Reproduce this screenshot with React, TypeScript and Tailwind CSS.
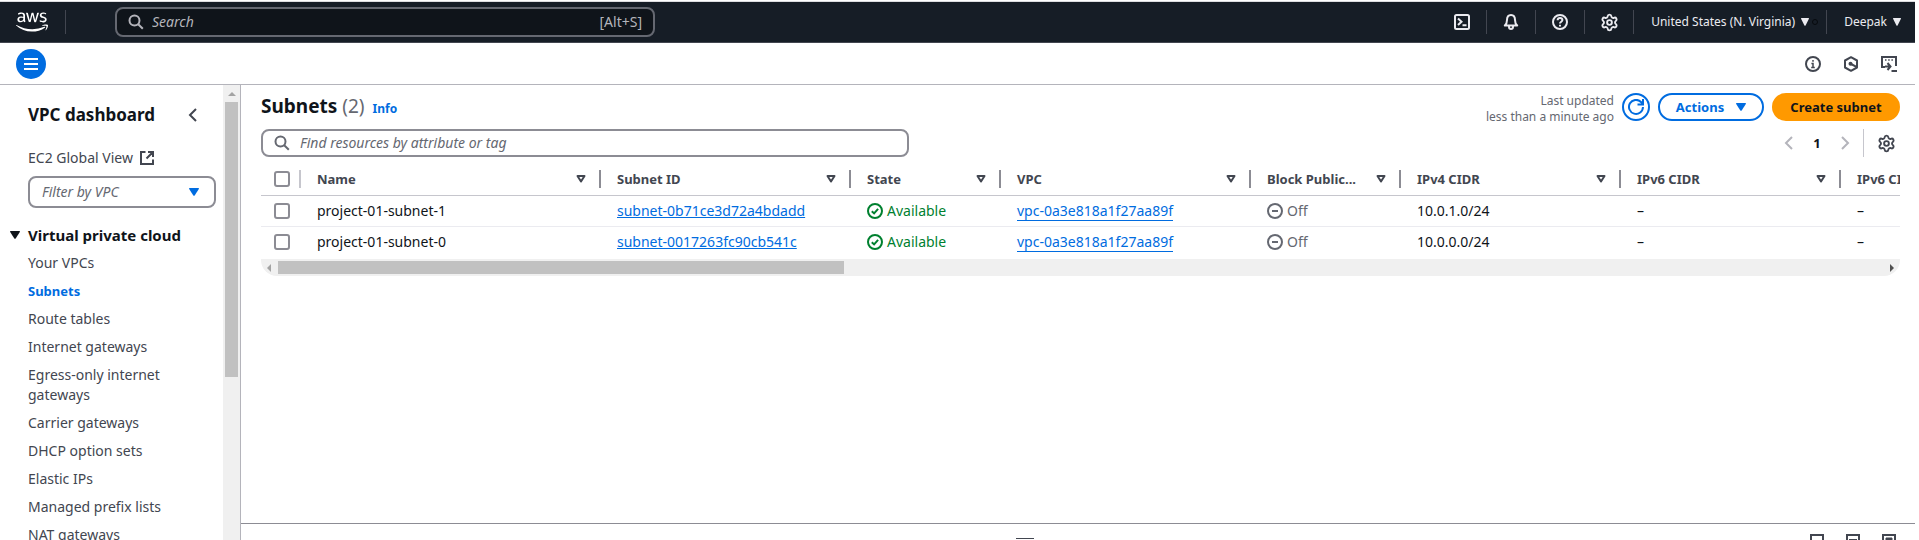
import React from "react";
import { Settings } from "lucide-react";
import { FaAws } from "react-icons/fa";

type IconProps = { className?: string; children?: React.ReactNode };

function Icon({ className = "", children }: IconProps) {
  return (
    <svg
      viewBox="0 0 16 16"
      className={`size-4 shrink-0 fill-none stroke-current stroke-2 ${className}`}
      aria-hidden="true"
    >
      {children}
    </svg>
  );
}

const SearchIcon = ({ className }: IconProps) => (
  <Icon className={className}>
    <circle cx="6.500" cy="6.500" r="5" />
    <path d="m10.200 10.200 4.600 4.600" />
  </Icon>
);

const Caret = ({ className = "w-2.5" }: IconProps) => (
  <svg viewBox="0 0 10 8" preserveAspectRatio="none" className={`h-2 shrink-0 fill-current ${className}`} aria-hidden="true">
    <path d="M.5 0h9Q10.2.1 9.8.9L5.7 7.4Q5 8.3 4.3 7.4L.2.9Q-.2.1.5 0Z" />
  </svg>
);

const SortIcon = () => (
  <svg viewBox="0 0 10 8" className="h-2 w-2.5 fill-none stroke-current stroke-2" aria-hidden="true">
    <path d="M1.5 1h7L5 6.5Z" strokeLinejoin="round" />
  </svg>
);

const AngleLeft = ({ className = "" }: IconProps) => (
  <Icon className={className}>
    <path d="M11 2 5 8l6 6" />
  </Icon>
);

const AngleRight = ({ className = "" }: IconProps) => (
  <Icon className={className}>
    <path d="m5 2 6 6-6 6" />
  </Icon>
);

function HeaderDivider() {
  return <span className="h-6 w-px shrink-0 bg-[#424650]" />;
}

function TopNav() {
  return (
    <header className="flex h-[41px] shrink-0 items-center border-b border-[#424650] bg-[#161d26] pl-4 text-xs text-[#ebebf0]">
      <a href="#home" aria-label="AWS home" className="mr-[17px] text-white">
        <FaAws className="h-[26px] w-8" />
      </a>
      <HeaderDivider />
      <button aria-label="Services" className="ml-4 mr-[17px]">
        <Icon className="fill-current stroke-none">
          {[0, 6, 12].map((y) =>
            [0, 6, 12].map((x) => <rect key={`${x}-${y}`} x={x} y={y} width="4" height="4" rx=".6" />),
          )}
        </Icon>
      </button>
      <label className="flex h-[30px] w-[540px] items-center gap-2 rounded-lg border-2 border-[#656871] bg-[#0f141a] px-[11px] text-sm text-[#b4b4bb]">
        <SearchIcon />
        <input
          aria-label="Search"
          placeholder="Search"
          className="min-w-0 flex-1 bg-transparent italic outline-none placeholder:text-[#b4b4bb]"
        />
        <span>[Alt+S]</span>
      </label>
      <div className="ml-auto flex items-center gap-4 pr-[14px]">
        <button aria-label="CloudShell">
          <Icon>
            <rect x="1" y="1" width="14" height="14" rx="1.5" />
            <path d="m4 4.5 3.5 3.2L4 11M8.5 11.2h4" />
          </Icon>
        </button>
        <HeaderDivider />
        <button aria-label="Notifications">
          <Icon>
            <path d="M1.800 11.500h12.400c-1.700-1.500-2.200-2.600-2.200-5.500C12 3 10.500 1 8 1S4 3 4 6c0 2.900-.5 4-2.200 5.500Z" strokeLinejoin="round" />
            <path d="M6 12v1a2 2 0 0 0 4 0v-1" />
          </Icon>
        </button>
        <HeaderDivider />
        <button aria-label="Help">
          <Icon>
            <circle cx="8" cy="8" r="7" />
            <path d="M5.600 6.200C5.700 4.800 6.700 4 8 4s2.400.8 2.400 2.100C10.400 7.800 8 7.800 8 9.600M8 10.800v1.700" />
          </Icon>
        </button>
        <HeaderDivider />
        <button aria-label="Settings" className="flex w-4 justify-center">
          <Settings className="size-[19px] shrink-0" strokeWidth={2.4} />
        </button>
        <HeaderDivider />
        <button className="-mr-2 flex items-center gap-1.5 whitespace-nowrap pl-px">
          <span>United States (N. Virginia)</span>
          <Caret className="w-2" />
          <span className="-ml-[3px] size-1.5 rounded-full border border-[#06090d]" />
        </button>
        <HeaderDivider />
        <button className="flex items-center gap-1.5 pl-px">
          Deepak
          <Caret className="w-2" />
        </button>
      </div>
    </header>
  );
}

function ToolBar() {
  return (
    <div className="flex h-[42px] shrink-0 items-center border-b border-[#b4b4bb] pl-4 pr-[18px] text-[#424650]">
      <button aria-label="Open menu" className="grid size-[30px] place-items-center rounded-full bg-[#006ce0] text-white">
        <Icon>
          <path d="M1 3h14M1 8h14M1 13h14" />
        </Icon>
      </button>
      <div className="ml-auto flex items-center gap-[22px]">
        <button aria-label="Information">
          <Icon>
            <circle cx="8" cy="8" r="7" />
            <path d="M8 4v1.800M6.400 7.500H8V12M6.200 11.500h3.600" strokeWidth="1.500" />
          </Icon>
        </button>
        <button aria-label="Diagnostics">
          <Icon>
            <path d="m8 1.200 6 3.300v7l-6 3.300-6-3.300v-7Z" strokeLinejoin="round" />
            <circle cx="7.500" cy="7.800" r="2" fill="currentColor" stroke="none" />
            <path d="m8 8 5.500 2.800" />
          </Icon>
        </button>
        <button aria-label="Shell panel">
          <Icon>
            <path d="M4 11H1V1h14v9" />
            <path d="M4 4h1.500M7.200 4h1.500M10.400 4h1.500" strokeWidth="1.500" />
            <path d="M4 10.500h5M6.500 7l3 3.500-3 3.500M10.500 15H16" />
          </Icon>
        </button>
      </div>
    </div>
  );
}

const links = [
  "Your VPCs",
  "Subnets",
  "Route tables",
  "Internet gateways",
  "Egress-only internet gateways",
  "Carrier gateways",
  "DHCP option sets",
  "Elastic IPs",
  "Managed prefix lists",
  "NAT gateways",
];

function SideNav() {
  return (
    <aside className="flex w-[241px] shrink-0 overflow-hidden border-r border-[#b4b4bb]">
      <nav className="min-w-0 flex-1 pl-7 pr-[7px] pt-[18px] text-[#424650]">
        <div className="flex items-center justify-between pr-[15px]">
          <h2 className="whitespace-nowrap text-[17px] leading-6 font-bold text-[#0f141a]">VPC dashboard</h2>
          <button aria-label="Close navigation">
            <AngleLeft />
          </button>
        </div>
        <a href="#global" className="mt-[21px] flex items-center gap-1.5 leading-5">
          EC2 Global View
          <Icon>
            <path d="M6.500 2H2v12h12V9.500M9 2h5v5M14 2 7.500 8.500" />
          </Icon>
        </a>
        <div className="mt-2 flex h-8 items-center rounded-lg border-2 border-[#8c8c94] pl-3 pr-[15px]">
          <input
            aria-label="Filter by VPC"
            placeholder="Filter by VPC"
            className="min-w-0 flex-1 italic outline-none placeholder:text-[#656871]"
          />
          <Caret className="w-2.5 text-[#006ce0]" />
        </div>
        <button className="-ml-[18px] mt-[17px] flex items-center gap-2 whitespace-nowrap text-[15px] leading-5 font-bold text-[#0f141a]">
          <Caret />
          Virtual private cloud
        </button>
        <ul className="mt-2 flex flex-col gap-2 leading-5">
          {links.map((text) => (
            <li key={text} className="pr-8">
              <a href="#nav" className={text === "Subnets" ? "text-[13px] font-bold text-[#006ce0]" : ""}>
                {text}
              </a>
            </li>
          ))}
        </ul>
      </nav>
      <div className="flex w-[17px] shrink-0 flex-col items-center bg-[#f0f0f0]">
        <span className="flex h-[17px] items-center">
          <svg viewBox="0 0 8 4" className="h-1 w-2 fill-[#a3a3a3]" aria-hidden="true">
            <path d="M4 0 8 4H0Z" />
          </svg>
        </span>
        <span className="h-[275px] w-[13px] bg-[#c1c1c1]" />
      </div>
    </aside>
  );
}

const columns = [
  "Name",
  "Subnet ID",
  "State",
  "VPC",
  "Block Public...",
  "IPv4 CIDR",
  "IPv6 CIDR",
  "IPv6 CIDR association ID",
];

const rows = [
  { name: "project-01-subnet-1", id: "subnet-0b71ce3d72a4bdadd", cidr: "10.0.1.0/24" },
  { name: "project-01-subnet-0", id: "subnet-0017263fc90cb541c", cidr: "10.0.0.0/24" },
];

function Check({ label }: { label: string }) {
  return (
    <input
      type="checkbox"
      aria-label={label}
      className="ml-[13px] block size-4 appearance-none rounded-[3px] border-2 border-[#8c8c94] bg-white"
    />
  );
}

function SubnetTable() {
  return (
    <div className="mt-1.5 overflow-hidden">
      <table className="w-[1800px] table-fixed border-collapse text-left">
        <colgroup>
          <col className="w-10" />
          <col className="w-[300px]" />
          <col className="w-[250px]" />
          <col className="w-[150px]" />
          <col className="w-[250px]" />
          <col className="w-[150px]" />
          <col className="w-[220px]" />
          <col className="w-[220px]" />
          <col className="w-[220px]" />
        </colgroup>
        <thead className="text-[13px] text-[#424650]">
          <tr className="h-8 border-b border-[#c6c6cd]">
            <th className="p-0">
              <div className="flex items-center justify-between">
                <Check label="Select all subnets" />
                <span className="h-[18px] w-0.5 bg-[#c6c6cd]" />
              </div>
            </th>
            {columns.map((name) => (
              <th key={name} className="p-0 pl-4">
                <div className="flex items-center">
                  <span className="flex-1 whitespace-nowrap pt-0.5">{name}</span>
                  <span className="mr-[13px]">
                    <SortIcon />
                  </span>
                  <span className="h-[18px] w-0.5 bg-[#8c8c94]" />
                </div>
              </th>
            ))}
          </tr>
        </thead>
        <tbody className="text-[#0f141a]">
          {rows.map((row) => (
            <tr key={row.name} className="h-[31px] border-b border-[#ebebf0] last:border-0">
              <td className="p-0">
                <Check label={`Select ${row.name}`} />
              </td>
              <td className="p-0 pl-4">{row.name}</td>
              <td className="p-0 pl-4">
                <a href="#subnet" className="text-[#006ce0] underline">
                  {row.id}
                </a>
              </td>
              <td className="p-0 pl-4">
                <span className="flex items-center gap-1 text-[#00802f]">
                  <Icon>
                    <circle cx="8" cy="8" r="7" />
                    <path d="m4.800 8.200 2.300 2.200 4-4.600" />
                  </Icon>
                  Available
                </span>
              </td>
              <td className="p-0 pl-4">
                <a href="#vpc" className="border-b border-[#006ce0] text-[#006ce0]">
                  vpc-0a3e818a1f27aa89f
                </a>
              </td>
              <td className="p-0 pl-4">
                <span className="flex items-center gap-1 text-[#656871]">
                  <Icon>
                    <circle cx="8" cy="8" r="7" />
                    <path d="M5 8h6" />
                  </Icon>
                  Off
                </span>
              </td>
              <td className="p-0 pl-4">{row.cidr}</td>
              <td className="p-0 pl-4">–</td>
              <td className="p-0 pl-4">–</td>
            </tr>
          ))}
        </tbody>
      </table>
      <div className="mt-0.5 flex h-[17px] items-center rounded-b-2xl bg-[#f0f0f0] px-1.5">
        <svg viewBox="0 0 4 8" className="mr-[7px] h-2 w-1 fill-[#a3a3a3]" aria-hidden="true">
          <path d="M0 4 4 0v8Z" />
        </svg>
        <span className="h-[13px] w-[566px] bg-[#c1c1c1]" />
        <svg viewBox="0 0 4 8" className="ml-auto h-2 w-1 fill-[#505050]" aria-hidden="true">
          <path d="M4 4 0 0v8Z" />
        </svg>
      </div>
    </div>
  );
}

function SplitPanel() {
  return (
    <section aria-label="Details" className="flex h-[17px] shrink-0 items-start overflow-hidden border-t border-[#8c8c94] text-[#424650]">
      <div className="flex flex-1 justify-center pt-[14px]">
        <span className="h-px w-[18px] bg-[#424650]" />
      </div>
      <div className="flex gap-5 pr-[18px] pt-[10px]">
        <button aria-label="Small panel">
          <Icon>
            <path d="M2 1h12v14H2z" />
          </Icon>
        </button>
        <button aria-label="Medium panel">
          <Icon>
            <path d="M2 1h12v14H2zM4 6h8" />
          </Icon>
        </button>
        <button aria-label="Full panel">
          <Icon>
            <path d="M2 1h12v14H2z" />
            <path d="M5 4h6v8H5z" fill="currentColor" strokeWidth="1" />
          </Icon>
        </button>
      </div>
    </section>
  );
}

export default function App() {
  return (
    <div className="flex h-screen flex-col overflow-hidden bg-white pr-1 pt-px font-['Noto_Sans',sans-serif] text-sm">
      <div className="h-px shrink-0 bg-[#dcdcdf]" />
      <TopNav />
      <ToolBar />
      <div className="flex min-h-0 flex-1">
        <SideNav />
        <div className="flex min-w-0 flex-1 flex-col">
          <main className="min-h-0 flex-1 overflow-hidden pl-5 pr-[15px] pt-2">
            <div className="flex h-7 items-center gap-2">
              <h1 className="text-[19px] font-bold text-[#0f141a]">
                Subnets <span className="font-normal text-[#656871]">(2)</span>
              </h1>
              <a href="#info" className="pt-1 text-xs font-bold text-[#006ce0]">
                Info
              </a>
              <p className="ml-auto pt-1 text-right text-xs leading-4 text-[#656871]">
                Last updated
                <br />
                less than a minute ago
              </p>
              <button aria-label="Refresh" className="grid size-7 place-items-center rounded-full border-2 border-[#006ce0] text-[#006ce0]">
                <Icon>
                  <path d="M15 8a7 7 0 1 1-2-5l1.500 1.500M15 0v5.500H9.500" />
                </Icon>
              </button>
              <button className="flex h-7 w-[106px] items-center justify-center gap-3 rounded-full border-2 border-[#006ce0] text-[13px] font-bold text-[#006ce0]">
                Actions
                <Caret />
              </button>
              <button className="h-7 w-32 rounded-full bg-[#ff9900] text-[13px] font-bold text-[#0f141a]">
                Create subnet
              </button>
            </div>
            <div className="mt-2 flex items-center">
              <label className="flex h-7 w-[648px] items-center gap-2.5 rounded-lg border-2 border-[#8c8c94] px-[11px] text-[#656871]">
                <SearchIcon />
                <input
                  aria-label="Find resources"
                  placeholder="Find resources by attribute or tag"
                  className="min-w-0 flex-1 italic outline-none placeholder:text-[#656871]"
                />
              </label>
              <div className="ml-auto flex items-center pr-1.5 text-[#b4b4bb]">
                <button aria-label="Previous page">
                  <AngleLeft />
                </button>
                <button className="w-10 text-center text-[13px] font-bold text-[#0f141a]">1</button>
                <button aria-label="Next page">
                  <AngleRight />
                </button>
                <span className="ml-2.5 mr-[14px] h-7 w-px bg-[#c6c6cd]" />
                <button aria-label="Preferences" className="flex w-4 justify-center text-[#424650]">
                  <Settings className="size-[19px] shrink-0" strokeWidth={2.4} />
                </button>
              </div>
            </div>
            <SubnetTable />
          </main>
          <SplitPanel />
        </div>
      </div>
    </div>
  );
}
